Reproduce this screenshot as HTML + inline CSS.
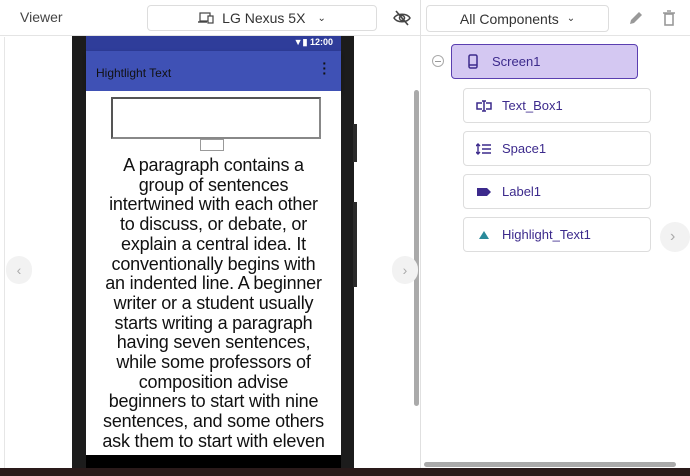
<!DOCTYPE html>
<html><head><style>
*{margin:0;padding:0;box-sizing:border-box}
body{width:690px;height:476px;overflow:hidden;background:#fff;font-family:"Liberation Sans",sans-serif;position:relative}
.a{position:absolute}
.hdr{left:0;top:0;width:690px;height:36px;border-bottom:1px solid #e4e4e4}
.comp{border:1px solid #ddd;border-radius:4px;background:#fff;height:35px;width:188px;left:463px;font-size:13px;color:#3c2a8c;display:flex;align-items:center;padding-left:12px}
.comp span{margin-left:10px}
.para{left:76px;top:156px;width:275px;text-align:center;font-size:18px;line-height:19.7px;color:#111;white-space:nowrap;letter-spacing:-0.2px}
</style></head><body>
<div class="a hdr"></div>
<div class="a" style="left:20px;top:9px;font-size:14px;color:#444">Viewer</div>
<div class="a" style="left:147px;top:5px;width:230px;height:26px;border:1px solid #ddd;border-radius:4px;font-size:14px;color:#333;display:flex;align-items:center;justify-content:center">
<svg width="16" height="12" viewBox="0 0 16 12" style="margin-right:8px"><rect x="2" y="1" width="10" height="8" fill="none" stroke="#444" stroke-width="1.2"/><path d="M0 10h9" stroke="#444" stroke-width="1.4"/><rect x="10" y="4" width="5" height="7" fill="#fff" stroke="#444" stroke-width="1.2"/></svg>LG Nexus 5X<span style="margin-left:12px;font-size:10px">&#8964;</span></div>
<svg class="a" style="left:393px;top:10px" width="18" height="16" viewBox="0 0 18 16"><path d="M1 8C4 3 14 3 17 8C14 13 4 13 1 8Z" fill="none" stroke="#444" stroke-width="1.5"/><circle cx="9" cy="8" r="2.5" fill="none" stroke="#444" stroke-width="1.5"/><path d="M3 1L15 15" stroke="#444" stroke-width="1.6"/></svg>
<div class="a" style="left:420px;top:0;width:1px;height:468px;background:#e0e0e0"></div>
<div class="a" style="left:4px;top:37px;width:1px;height:431px;background:#e6e6e6"></div>
<div class="a" style="left:72px;top:36px;width:282px;height:432px;background:#1c1c1c"></div>
<div class="a" style="left:353px;top:124px;width:4px;height:38px;background:#2a2a2a"></div>
<div class="a" style="left:353px;top:202px;width:4px;height:85px;background:#2a2a2a"></div>
<div class="a" style="left:86px;top:36px;width:255px;height:15px;background:#2f3d9a;color:#fff;font-size:9px;text-align:right;padding-right:8px;line-height:13px;font-weight:bold">&#9660;&#9646; 12:00</div>
<div class="a" style="left:86px;top:51px;width:255px;height:40px;background:#3f51b5;box-shadow:0 2px 4px rgba(0,0,0,.3);font-size:12px;color:#111;padding:15px 0 0 10px">Hightlight Text<span style="position:absolute;right:14px;top:10px;font-weight:bold;font-size:14px;line-height:5px">&middot;<br>&middot;<br>&middot;</span></div>
<div class="a" style="left:86px;top:91px;width:255px;height:365px;background:#fff"></div>
<div class="a" style="left:111px;top:97px;width:210px;height:42px;border:2px solid #555;border-right-color:#888;border-bottom-color:#888"></div>
<div class="a" style="left:200px;top:139px;width:24px;height:12px;border:1px solid #999"></div>
<div class="a para">A paragraph contains a<br>group of sentences<br>intertwined with each other<br>to discuss, or debate, or<br>explain a central idea. It<br>conventionally begins with<br>an indented line. A beginner<br>writer or a student usually<br>starts writing a paragraph<br>having seven sentences,<br>while some professors of<br>composition advise<br>beginners to start with nine<br>sentences, and some others<br>ask them to start with eleven</div>
<div class="a" style="left:86px;top:455px;width:255px;height:13px;background:#000"></div>
<div class="a" style="left:414px;top:90px;width:5px;height:316px;background:#aaa;border-radius:3px"></div>
<div class="a" style="left:6px;top:256px;width:26px;height:28px;border-radius:14px;background:#f2f2f2;color:#aaa;font-size:14px;text-align:center;line-height:28px">&lsaquo;</div>
<div class="a" style="left:392px;top:256px;width:26px;height:28px;border-radius:14px;background:#f2f2f2;color:#aaa;font-size:14px;text-align:center;line-height:28px">&rsaquo;</div>
<div class="a" style="left:426px;top:5px;width:183px;height:27px;border:1px solid #ddd;border-radius:4px;font-size:14px;color:#333;display:flex;align-items:center;justify-content:center">All Components<span style="margin-left:8px;font-size:10px">&#8964;</span></div>
<svg class="a" style="left:628px;top:10px" width="16" height="16" viewBox="0 0 16 16"><path d="M2 14l1-4 8-8 3 3-8 8z" fill="#999"/></svg>
<svg class="a" style="left:662px;top:10px" width="14" height="16" viewBox="0 0 14 16"><path d="M1 3h12M5 1h4" stroke="#999" stroke-width="1.6"/><rect x="3" y="4" width="8" height="11" fill="none" stroke="#999" stroke-width="1.6"/></svg>
<div class="a" style="left:432px;top:55px;width:12px;height:12px;border:1px solid #aaa;border-radius:50%"><div style="margin:4.5px 2px;height:1px;background:#999"></div></div>
<div class="a" style="left:451px;top:44px;width:187px;height:35px;background:#d4c8f2;border:1px solid #5a3fb0;border-radius:4px;font-size:13px;color:#3c2a8c;display:flex;align-items:center;padding-left:16px"><svg width="10" height="15" viewBox="0 0 10 15"><rect x="1" y="1" width="8" height="13" rx="1.5" fill="none" stroke="#3c2a8c" stroke-width="1.5"/><path d="M1 11h8" stroke="#3c2a8c" stroke-width="1.5"/></svg><span style="margin-left:14px">Screen1</span></div>
<div class="a comp" style="top:88px"><svg width="16" height="12" viewBox="0 0 16 12"><path d="M6 3H1v6h5M10 3h5v6h-5M8 1v10M6 1h4M6 11h4" fill="none" stroke="#3c2a8c" stroke-width="1.5"/></svg><span>Text_Box1</span></div>
<div class="a comp" style="top:131px"><svg width="16" height="12" viewBox="0 0 16 12"><path d="M2 1v10M0 3l2-2 2 2M0 9l2 2 2-2M6 2h9M6 6h9M6 10h9" fill="none" stroke="#3c2a8c" stroke-width="1.4"/></svg><span>Space1</span></div>
<div class="a comp" style="top:174px"><svg width="16" height="12" viewBox="0 0 16 12"><path d="M1 2h10l4 4-4 4H1z" fill="#3c2a8c"/></svg><span>Label1</span></div>
<div class="a comp" style="top:217px"><svg width="16" height="12" viewBox="0 0 16 12"><path d="M8 2l5 8H3z" fill="#2a8a9a"/></svg><span>Highlight_Text1</span></div>
<div class="a" style="left:660px;top:222px;width:30px;height:30px;border-radius:15px;background:#f2f2f2;color:#aaa;font-size:16px;line-height:30px;padding-left:10px">&rsaquo;</div>
<div class="a" style="left:424px;top:462px;width:252px;height:5px;background:#aaa;border-radius:3px"></div>
<div class="a" style="left:0;top:468px;width:690px;height:8px;background:#2a1a1a"></div>
</body></html>
